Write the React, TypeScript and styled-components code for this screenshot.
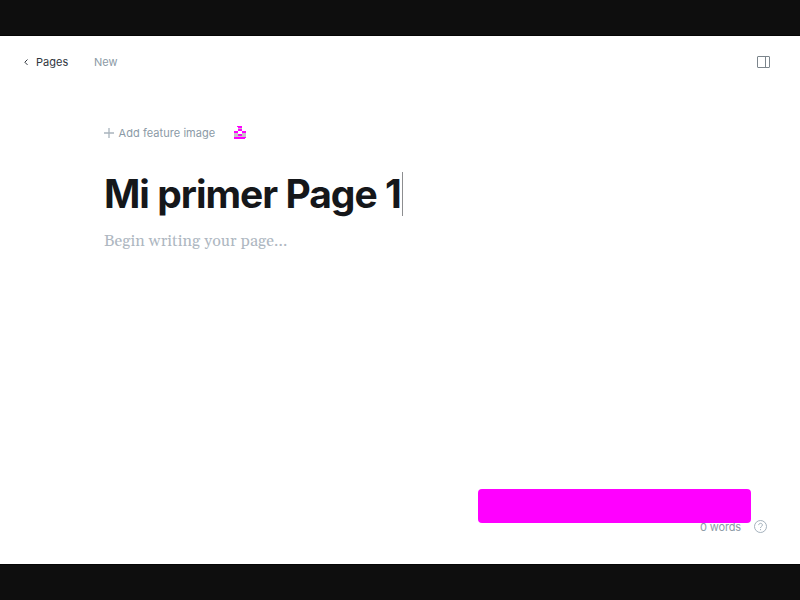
import React from 'react';
import styled, { createGlobalStyle } from 'styled-components';

const Global = createGlobalStyle`
  * { box-sizing: border-box; }
  body { margin: 0; background: #fff; font-family: Inter, sans-serif; }
`;
const Screen = styled.div`
  width: 800px; height: 600px; overflow: hidden;
  display: grid; grid-template-rows: 36px 528px 36px;
  background: #fff;
`;
const Band = styled.div<{ $edge: 'top' | 'bottom' }>`
  background: #0e0e0e;
  border-${p => (p.$edge === 'top' ? 'bottom' : 'top')}: 1px solid #050505;
`;
const Editor = styled.main`display: flex; flex-direction: column;`;
const Header = styled.header`
  height: 52px; padding: 0 30px 0 23px;
  display: flex; align-items: center; justify-content: space-between;
`;
const Crumbs = styled.nav`
  display: flex; align-items: center;
  font-size: 11px; line-height: 16px; letter-spacing: 0.05px;
`;
const Back = styled.a`
  display: flex; align-items: center; gap: 7px; color: #30363d;
  font-weight: 400; width: 71px;
`;
const Status = styled.span`color: #8b9aa6;`;
const Content = styled.section`flex: 1; padding: 37px 104px 0;`;
const Feature = styled.div`
  height: 16px; display: flex; align-items: center;
  color: #8b9aa6; font-size: 11px; letter-spacing: 0.06px;
`;
const AddButton = styled.span`display: flex; align-items: center; gap: 4.5px; width: 129px; white-space: nowrap;`;
const TitleRow = styled.div`height: 44px; margin-top: 31px; display: flex; align-items: center;`;
const Title = styled.h1`
  margin: 0; font-size: 39px; line-height: 44px; font-weight: 700;
  letter-spacing: -1px; color: #15171a; white-space: nowrap;
`;
const Caret = styled.span`width: 1px; height: 44px; margin-left: 1.3px; background: #8d8e90;`;
const Placeholder = styled.p`
  margin: 14px 0 0; font-family: Gelasio, Georgia, "Liberation Serif", serif;
  font-size: 16px; line-height: 22px; letter-spacing: 0.08px; color: #aeb7c1;
`;
const Footer = styled.footer`
  position: relative; height: 75px; padding: 30px 32px 0 0;
  display: flex; justify-content: flex-end; align-items: flex-start; gap: 13px;
  color: #8b9aa6; font-size: 11px; line-height: 16px; letter-spacing: -0.15px;
`;
const Redaction = styled.div`
  position: absolute; left: 478px; top: 0; width: 273px; height: 34px;
  border-radius: 4px; background: #f0f;
`;

export default function App() {
  return (
    <>
      <Global />
      <Screen>
        <Band $edge="top" />
        <Editor>
          <Header>
            <Crumbs>
              <Back>
                <svg width="6" height="8" viewBox="0 0 6 8" fill="none" stroke="#30363d"><path d="M4.5 1.5 1.8 4.2l2.7 2.7" /></svg>
                Pages
              </Back>
              <Status>New</Status>
            </Crumbs>
            <svg width="13" height="12" viewBox="0 0 13 12" fill="none" stroke="#7c858c">
              <rect x=".5" y=".5" width="12" height="11" rx=".5" /><path d="M8.5 1v10" />
            </svg>
          </Header>
          <Content>
            <Feature>
              <AddButton>
                <svg width="10" height="10" viewBox="0 0 10 10" stroke="#a9b4bd"><path d="M5 0v10M0 5h10" strokeWidth="1.3" /></svg>
                Add feature image
              </AddButton>
              <svg width="14" height="14" viewBox="0 0 14 14" shapeRendering="crispEdges">
                <path fill="#c5c5c5" d="M5 2h4v1H5zM1 7h4v4H1zM9 7h4v4H9zM5 10h4v1H5z" />
                <path fill="#f0f" d="M4 0h5v1H4zM5 1h4v1H5zM5 3h4v2H5zM1 5h4v2H1zM9 5h4v2H9zM5 8h4v2H5zM1 11h12v1H1zM1 12h11v1H1z" />
              </svg>
            </Feature>
            <TitleRow><Title>Mi primer Page 1</Title><Caret /></TitleRow>
            <Placeholder>Begin writing your page...</Placeholder>
          </Content>
          <Footer>
            <span>0 words</span>
            <svg width="14" height="16" viewBox="0 -.5 14 16" fill="none" stroke="#9aa8b4">
              <circle cx="6.5" cy="7" r="6" strokeWidth=".9" />
              <path d="M4.7 5.6c0-2.4 3.7-2.3 3.7-.1C8.4 7 6.5 6.8 6.5 8.5M6.5 9.6v1.1" strokeWidth=".9" />
            </svg>
            <Redaction />
          </Footer>
        </Editor>
        <Band $edge="bottom" />
      </Screen>
    </>
  );
}
